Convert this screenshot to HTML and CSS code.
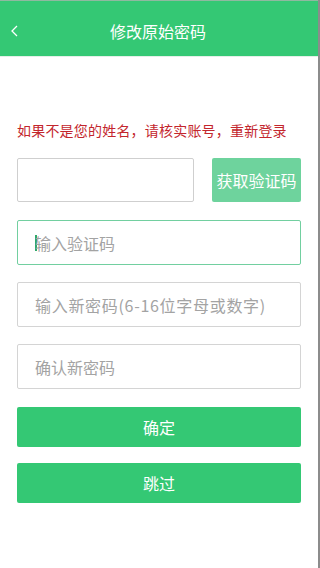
FILE: index.html
```html
<!DOCTYPE html>
<html lang="zh-CN">
<head>
<meta charset="utf-8">
<title>修改原始密码</title>
<link rel="stylesheet" href="styles.css">
</head>
<body>
<div class="page">
  <header class="topbar">
    <span class="back">
      <svg width="10" height="14" viewBox="0 0 10 14"><polyline points="7,2 2,7 7,12" fill="none" stroke="#ffffff" stroke-width="1.3"/></svg>
    </span>
    <h1 class="title">修改原始密码</h1>
  </header>
  <main class="content">
    <p class="notice">如果不是您的姓名，请核实账号，重新登录</p>
    <div class="row">
      <div class="field field-short"></div>
      <button class="btn-code">获取验证码</button>
    </div>
    <div class="field field-focus"><span class="cursor"></span><span class="ph">输入验证码</span></div>
    <div class="field"><span class="ph ph-wide">输入新密码(6-16位字母或数字)</span></div>
    <div class="field"><span class="ph">确认新密码</span></div>
    <button class="btn-main btn-ok">确定</button>
    <button class="btn-main btn-skip">跳过</button>
  </main>
</div>
</body>
</html>
```
FILE: styles.css
```css
* { box-sizing: border-box; }
html, body { margin: 0; padding: 0; background: #fff; }
body { font-family: "Noto Sans CJK SC", "Noto Sans", sans-serif; }
.page {
  width: 320px;
  height: 568px;
  border-right: 2px solid #8c8c8c;
  background: #fff;
}
.topbar {
  height: 56px;
  background: #34c874;
  border-top: 1px solid #8fb9a0;
  display: flex;
  align-items: center;
  justify-content: center;
  position: relative;
  box-shadow: 0 1px 0 #e4efe8;
}
.back {
  position: absolute;
  left: 10px;
  top: 23px;
  display: flex;
}
.title {
  margin: 0;
  font-size: 16px;
  font-weight: normal;
  color: #fff;
  line-height: 20px;
  padding-top: 4px;
  padding-right: 2px;
}
.content {
  padding: 0 17px;
  display: flex;
  flex-direction: column;
}
.notice {
  margin: 64px 0 0;
  font-size: 14px;
  line-height: 20px;
  color: #c3262d;
  letter-spacing: 0.2px;
}
.row {
  display: flex;
  justify-content: space-between;
  margin-top: 18px;
}
.field {
  height: 45px;
  border: 1px solid #d4d4d4;
  border-radius: 2px;
  display: flex;
  align-items: center;
  padding-left: 17px;
  margin-top: 17px;
}
.row .field { margin-top: 0; height: 44px; }
.field-short { width: 177px; border-color: #cfcfcf; }
.field-focus { border-color: #72cfa0; margin-top: 18px; height: 45px; }
.cursor {
  width: 2px;
  height: 16px;
  background: #2fa86b;
  margin-right: -2px;
}
.ph {
  font-size: 16px;
  color: #a3a3a3;
  line-height: 20px;
}
.ph-wide { letter-spacing: 0.7px; }
.btn-code {
  width: 89px;
  height: 44px;
  border: none;
  border-radius: 2px;
  background: #6ed39d;
  color: #fff;
  font-family: inherit;
  font-size: 16px;
  padding: 0;
}
.btn-main {
  height: 40px;
  border: none;
  border-radius: 2px;
  background: #34c874;
  color: #fff;
  font-family: inherit;
  font-size: 16px;
  padding: 0;
}
.btn-ok { margin-top: 18px; }
.btn-skip { margin-top: 16px; }
```
